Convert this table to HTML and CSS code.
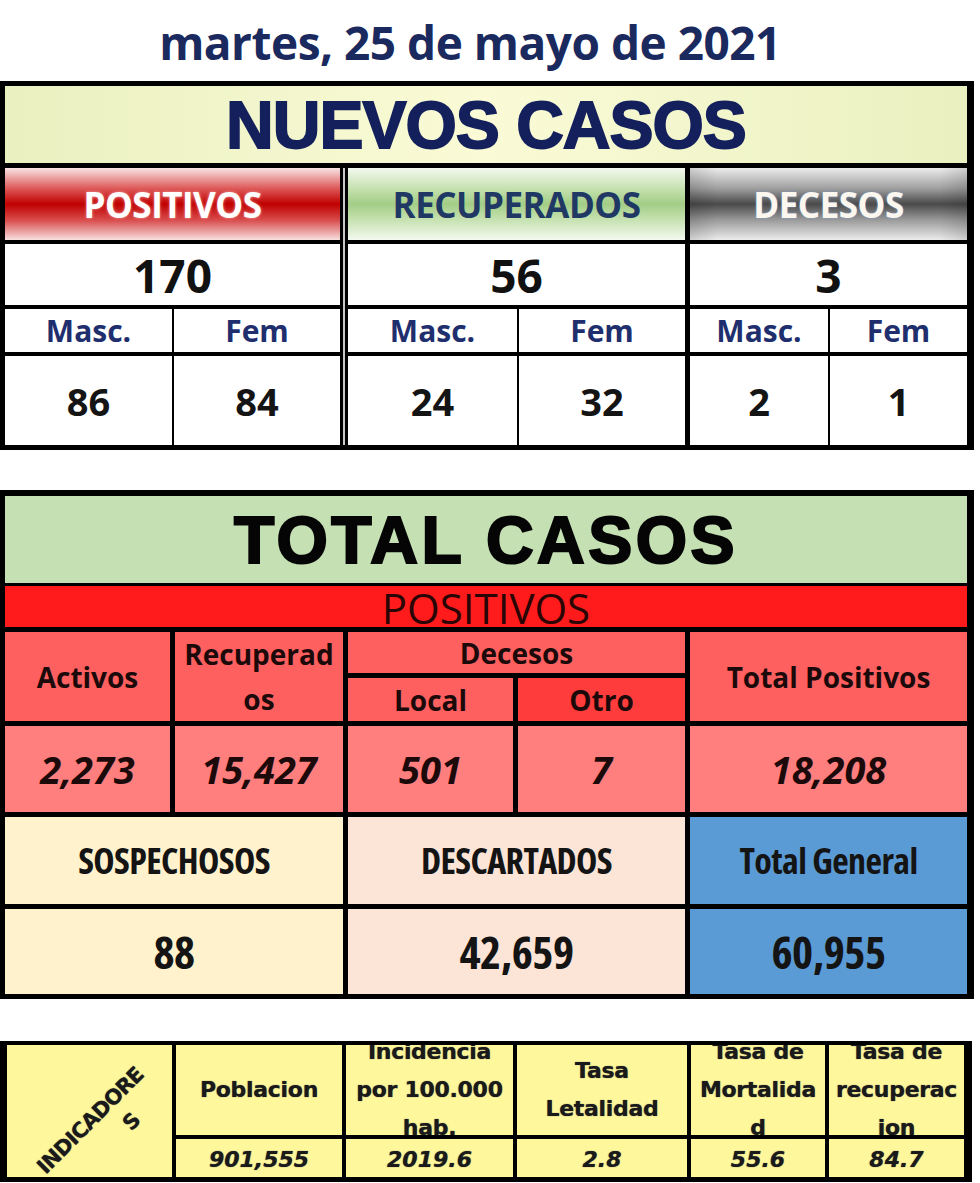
FILE: index.html
```html
<!DOCTYPE html>
<html lang="es">
<head>
<meta charset="utf-8">
<title>Reporte COVID-19</title>
<link rel="stylesheet" href="styles.css">
</head>
<body>
<div class="date">martes, 25 de mayo de 2021</div>

<section class="nc">
  <div class="nc-title">NUEVOS CASOS</div>
  <div class="nc-body">
    <div class="grp g1">
      <div class="cell head h-pos">POSITIVOS</div>
      <div class="cell total">170</div>
      <div class="cell sub">Masc.</div>
      <div class="cell sub">Fem</div>
      <div class="cell num">86</div>
      <div class="cell num">84</div>
    </div>
    <div class="sep"></div>
    <div class="grp g2">
      <div class="cell head h-rec">RECUPERADOS</div>
      <div class="cell total">56</div>
      <div class="cell sub">Masc.</div>
      <div class="cell sub">Fem</div>
      <div class="cell num">24</div>
      <div class="cell num">32</div>
    </div>
    <div class="grp g3">
      <div class="cell head h-dec">DECESOS</div>
      <div class="cell total">3</div>
      <div class="cell sub">Masc.</div>
      <div class="cell sub">Fem</div>
      <div class="cell num">2</div>
      <div class="cell num">1</div>
    </div>
  </div>
</section>

<section class="tc">
  <div class="tc-title">TOTAL CASOS</div>
  <div class="tc-bar">POSITIVOS</div>
  <div class="tc-grid">
    <div class="cell rh act">Activos</div>
    <div class="cell rh rec">Recuperad<br>os</div>
    <div class="cell rh dec">Decesos</div>
    <div class="cell rh tpos">Total Positivos</div>
    <div class="cell rh loc">Local</div>
    <div class="cell rh otro">Otro</div>
    <div class="cell rv">2,273</div>
    <div class="cell rv">15,427</div>
    <div class="cell rv">501</div>
    <div class="cell rv">7</div>
    <div class="cell rv">18,208</div>
    <div class="cell sg sos">SOSPECHOSOS</div>
    <div class="cell sg des">DESCARTADOS</div>
    <div class="cell sg tg">Total General</div>
    <div class="cell sv sos">88</div>
    <div class="cell sv des">42,659</div>
    <div class="cell sv tg">60,955</div>
  </div>
</section>

<section class="ind">
  <div class="cell ind-label"><div class="rot"><span class="l1">INDICADORE</span><span class="l2">S</span></div></div>
  <div class="cell ih">Poblacion</div>
  <div class="cell ih">Incidencia<br>por 100.000<br>hab.</div>
  <div class="cell ih">Tasa<br>Letalidad</div>
  <div class="cell ih">Tasa de<br>Mortalida<br>d</div>
  <div class="cell ih">Tasa de<br>recuperac<br>ion</div>
  <div class="cell iv">901,555</div>
  <div class="cell iv">2019.6</div>
  <div class="cell iv">2.8</div>
  <div class="cell iv">55.6</div>
  <div class="cell iv">84.7</div>
</section>
</body>
</html>
```

FILE: styles.css
```css
* { box-sizing: border-box; margin: 0; padding: 0; }

body {
  width: 980px;
  height: 1183px;
  overflow: hidden;
  background: #fff;
  font-family: "Open Sans", "Noto Sans", sans-serif;
}

.cell {
  display: flex;
  align-items: center;
  justify-content: center;
  text-align: center;
  overflow: hidden;
}

/* Date */
.date {
  height: 81px;
  display: flex;
  align-items: center;
  justify-content: center;
  padding-right: 40px;
  padding-top: 2px;
  color: #1b2a5e;
  font-size: 46px;
  font-weight: 700;
  letter-spacing: -0.5px;
}

/* Nuevos casos */
.nc {
  width: 974px;
  background: #000;
  padding: 5px 7px 5px 5px;
}

.nc-title {
  height: 77px;
  margin-bottom: 5px;
  display: flex;
  align-items: center;
  justify-content: center;
  background: linear-gradient(90deg, #eaf0c0, #fafbd6 50%, #eaf0c0);
  font-family: "Liberation Sans", Arial, sans-serif;
  font-weight: 700;
  font-size: 66px;
  line-height: 1;
  letter-spacing: -1px;
  color: #13205c;
  -webkit-text-stroke: 1.8px #13205c;
}

.nc-body { display: flex; }

.grp {
  display: grid;
  grid-template-rows: 72px 61px 43px 89px;
  row-gap: 4px;
  column-gap: 2px;
}
.g1 { width: 335px; grid-template-columns: 167px 166px; }
.g2 { width: 337px; grid-template-columns: 169px 166px; }
.g3 { width: 277px; margin-left: 5px; grid-template-columns: 138px 137px; }

.sep {
  width: 8px;
  background: linear-gradient(90deg, #000 0 3px, #c8c8c8 3px 5px, #000 5px);
}

.head, .total { grid-column: 1 / 3; }

.head {
  font-size: 35px;
  font-weight: 700;
  line-height: 1;
  letter-spacing: -0.5px;
}
.h-pos {
  color: #fff;
  background: linear-gradient(180deg, #f9e4e4 0%, #de5a5a 28%, #c00000 50%, #d84a4a 72%, #f8e0e0 100%);
  text-shadow: 0 0 3px #f3a0a0;
}
.h-rec {
  color: #1f3864;
  background: linear-gradient(180deg, #f4f9f0 0%, #c3e0ad 30%, #a3cd86 50%, #c3e0ad 70%, #f4f9f0 100%);
}
.h-dec {
  color: #fbf6ee;
  background:
    linear-gradient(90deg, rgba(0,0,0,0.12), rgba(0,0,0,0) 10%, rgba(0,0,0,0) 90%, rgba(0,0,0,0.12)),
    linear-gradient(180deg, #ececec 0%, #a0a0a0 28%, #4a4a4a 50%, #9a9a9a 72%, #ececec 100%);
  text-shadow: 0 0 2px #7fa4d8;
}

.total {
  background: #fff;
  color: #111;
  font-size: 46px;
  font-weight: 700;
  line-height: 1;
}
.sub {
  background: #fff;
  color: #1f2f6e;
  font-size: 30px;
  font-weight: 700;
  line-height: 1;
}
.num {
  background: #fff;
  color: #141414;
  font-size: 38px;
  font-weight: 700;
  line-height: 1;
}

/* Total casos */
.tc {
  width: 974px;
  margin-top: 40px;
  background: #000;
  padding: 6px 7px 5px 5px;
}

.tc-title {
  height: 87px;
  margin-bottom: 3px;
  display: flex;
  align-items: center;
  justify-content: center;
  background: #c5e0b3;
  font-family: "Liberation Sans", Arial, sans-serif;
  font-weight: 700;
  font-size: 66px;
  line-height: 1;
  letter-spacing: 3.5px;
  color: #050505;
  -webkit-text-stroke: 2.2px #050505;
}

.tc-bar {
  height: 41px;
  margin-bottom: 5px;
  display: flex;
  align-items: center;
  justify-content: center;
  background: #ff1b1b;
  color: #2a0505;
  font-size: 42px;
  font-weight: 400;
  line-height: 1;
  padding-top: 3px;
  overflow: hidden;
}

.tc-grid {
  display: grid;
  grid-template-columns: 165px 168px 165px 167px 277px;
  grid-template-rows: 41px 43px 86px 87px 85px;
  column-gap: 5px;
  row-gap: 5px;
}

.rh {
  background: #fe5f5f;
  color: #1c0a0a;
  font-size: 28px;
  font-weight: 700;
  line-height: 1;
}
.act { grid-column: 1; grid-row: 1 / 3; }
.rec { grid-column: 2; grid-row: 1 / 3; line-height: 45px; }
.dec { grid-column: 3 / 5; grid-row: 1; }
.tpos { grid-column: 5; grid-row: 1 / 3; }
.loc { grid-column: 3; grid-row: 2; }
.otro { grid-column: 4; grid-row: 2; background: #ff3c3c; }

.rv {
  background: #ff7e7e;
  color: #1c0a0a;
  font-size: 38px;
  font-weight: 700;
  font-style: italic;
  line-height: 1;
}

.sg, .sv {
  color: #141414;
  font-weight: 700;
  line-height: 1;
  font-stretch: 75%;
}
.sg { font-size: 36px; letter-spacing: -0.6px; }
.sv { font-size: 45px; letter-spacing: -0.5px; }
.sos { grid-column: 1 / 3; background: #fff2cd; }
.des { grid-column: 3 / 5; background: #fce4d7; }
.tg { grid-column: 5; background: #5b9bd5; }

/* Indicadores */
.ind {
  width: 972px;
  margin-top: 42px;
  background: #000;
  padding: 4px 7px 5px 7px;
  display: grid;
  grid-template-columns: 165px 166px 167px 170px 134px 135px;
  grid-template-rows: 90px 38px;
  column-gap: 4px;
  row-gap: 4px;
  font-family: "DejaVu Sans", Verdana, sans-serif;
  font-weight: 700;
  color: #1a1a1a;
  text-shadow: 0 0 1px #444;
}
.ind .cell { background: #fff79c; }

.ind-label { grid-row: 1 / 3; }
.rot {
  transform: translate(12px, 20px) rotate(-45deg);
  font-size: 21px;
  line-height: 30px;
  letter-spacing: -0.8px;
  text-align: center;
}
.rot span { display: block; }
.rot .l2 { padding-left: 56px; }

.ih {
  font-size: 22px;
  line-height: 38px;
  letter-spacing: -0.3px;
}
.iv {
  font-size: 22px;
  font-style: italic;
  line-height: 1;
  padding-top: 3px;
}
```
